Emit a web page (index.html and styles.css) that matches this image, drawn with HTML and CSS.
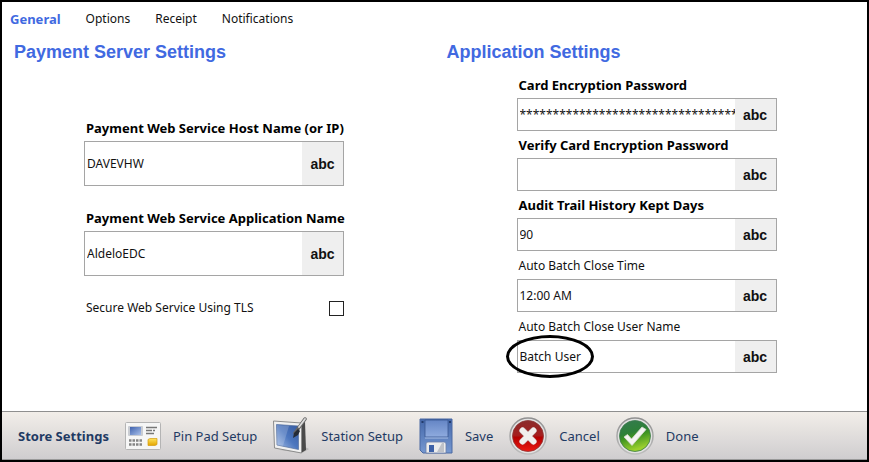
FILE: index.html
```html
<!DOCTYPE html>
<html lang="en">
<head>
    <meta charset="UTF-8">
    <meta name="viewport" content="width=device-width, initial-scale=1.0">
    <title>Store Settings</title>
    <link rel="stylesheet" href="styles.css">
</head>
<body>

    <nav class="tabs">
        <a href="#general" class="active">General</a>
        <a href="#options">Options</a>
        <a href="#receipt">Receipt</a>
        <a href="#notifications">Notifications</a>
    </nav>

    <main class="settings">
        <section class="column server">
            <h2>Payment Server Settings</h2>
            <div class="fields">
                <div class="field required tall">
                    <label for="hostName">Payment Web Service Host Name (or IP)</label>
                    <div class="box">
                        <input type="text" id="hostName" value="DAVEVHW">
                        <button type="button">abc</button>
                    </div>
                </div>
                <div class="field required tall">
                    <label for="appName">Payment Web Service Application Name</label>
                    <div class="box">
                        <input type="text" id="appName" value="AldeloEDC">
                        <button type="button">abc</button>
                    </div>
                </div>
                <div class="check">
                    <label for="tls">Secure Web Service Using TLS</label>
                    <input type="checkbox" id="tls">
                </div>
            </div>
        </section>

        <section class="column application">
            <h2>Application Settings</h2>
            <div class="fields">
                <div class="field required">
                    <label for="password">Card Encryption Password</label>
                    <div class="box">
                        <input type="text" id="password" value="****************************************">
                        <button type="button">abc</button>
                    </div>
                </div>
                <div class="field required">
                    <label for="verify">Verify Card Encryption Password</label>
                    <div class="box">
                        <input type="text" id="verify">
                        <button type="button">abc</button>
                    </div>
                </div>
                <div class="field required">
                    <label for="auditDays">Audit Trail History Kept Days</label>
                    <div class="box">
                        <input type="text" id="auditDays" value="90">
                        <button type="button">abc</button>
                    </div>
                </div>
                <div class="field">
                    <label for="closeTime">Auto Batch Close Time</label>
                    <div class="box">
                        <input type="text" id="closeTime" value="12:00 AM">
                        <button type="button">abc</button>
                    </div>
                </div>
                <div class="field">
                    <label for="closeUser">Auto Batch Close User Name</label>
                    <div class="box">
                        <input type="text" id="closeUser" value="Batch User">
                        <button type="button">abc</button>
                        <span class="circle"></span>
                    </div>
                </div>
            </div>
        </section>
    </main>

    <footer class="toolbar">
        <strong>Store Settings</strong>
        <button type="button">
            <svg width="36" height="28" viewBox="0 0 36 28">
                <defs>
                    <linearGradient id="screen" x1="0" y1="0" x2="1" y2="1">
                        <stop offset="0" stop-color="#3f62ae"/>
                        <stop offset="1" stop-color="#a9c0ea"/>
                    </linearGradient>
                    <linearGradient id="gold" x1="0" y1="0" x2="0" y2="1">
                        <stop offset="0" stop-color="#ffe45c"/>
                        <stop offset="1" stop-color="#e3a400"/>
                    </linearGradient>
                </defs>
                <rect x="0.5" y="0.5" width="35" height="27" rx="1" fill="#f6f6f6" stroke="#b4b4b4"/>
                <rect x="3" y="4" width="15" height="10" rx="1" fill="#c9ccd2"/>
                <rect x="5" y="5" width="11" height="8" fill="url(#screen)"/>
                <path d="M21 5.500h11M21 8.500h6M28 8.500h2M21 11.500h8" stroke="#777" stroke-width="1.300"/>
                <path d="M4 18.500h13M4 22.500h13" stroke="#858585" stroke-width="2.500" stroke-dasharray="2.500 1"/>
                <path d="M23 17.500l2-1h7v6l-2 1h-7z" fill="url(#gold)" stroke="#d29c12" stroke-width="0.700"/>
            </svg>
            Pin Pad Setup
        </button>
        <button type="button">
            <svg width="36" height="38" viewBox="0 0 36 38">
                <defs>
                    <linearGradient id="tablet" x1="1" y1="0" x2="0" y2="1">
                        <stop offset="0" stop-color="#35599f"/>
                        <stop offset="0.5" stop-color="#4d77bf"/>
                        <stop offset="1" stop-color="#a9c1e8"/>
                    </linearGradient>
                </defs>
                <path d="M7 33l22 3 7-4-6-3z" fill="#aaa" opacity="0.700"/>
                <path d="M28 6l4-1 1 28-5 3z" fill="#4a4a4a"/>
                <path d="M0.500 4l28 2v30L1.500 31z" fill="#f0f0f0" stroke="#8c8c8c"/>
                <path d="M3.500 7.500l22 1.500v23.500L4 28z" fill="url(#tablet)" stroke="#55709f" stroke-width="0.700"/>
                <path d="M4 8l12 1L10 29l-6-1z" fill="#fff" opacity="0.180"/>
                <path d="M32 2L22 16" stroke="#666" stroke-width="3.500" stroke-linecap="round"/>
                <path d="M32 2l-6 8" stroke="#ddd" stroke-width="1.800" stroke-linecap="round"/>
                <path d="M25 12l-4 4-1 5 5-3 2-4z" fill="#252b36"/>
            </svg>
            Station Setup
        </button>
        <button type="button">
            <svg width="34" height="36" viewBox="0 0 34 36">
                <defs>
                    <linearGradient id="disk" x1="0" y1="0" x2="0" y2="1">
                        <stop offset="0" stop-color="#4467aa"/>
                        <stop offset="1" stop-color="#7698d0"/>
                    </linearGradient>
                    <linearGradient id="label" x1="0" y1="0" x2="0" y2="1">
                        <stop offset="0" stop-color="#6485c5"/>
                        <stop offset="1" stop-color="#8fabde"/>
                    </linearGradient>
                </defs>
                <path d="M1 1h32v34H4l-3-3z" fill="url(#disk)" stroke="#4a68a2"/>
                <path d="M6 2h23v17H6z" fill="url(#label)" stroke="#38568f" stroke-width="0.800"/>
                <path d="M6 20h23" stroke="#a9bfe6"/>
                <path d="M2.500 3h2v2h-2zM30 3h2v2h-2z" fill="#233b6b"/>
                <path d="M7 35V26q0-2 2-2h16q2 0 2 2v9z" fill="#ececec" stroke="#6b7fa8" stroke-width="0.800"/>
                <path d="M10 27h5v7h-5z" fill="#3e62a8"/>
                <path d="M18 34l5-9h2v9z" fill="#bfc2c8"/>
            </svg>
            Save
        </button>
        <button type="button">
            <svg width="38" height="38" viewBox="0 0 38 38">
                <defs>
                    <linearGradient id="red" x1="0" y1="0" x2="0" y2="1">
                        <stop offset="0" stop-color="#8b2c2c"/>
                        <stop offset="0.480" stop-color="#a51e1e"/>
                        <stop offset="0.550" stop-color="#b40000"/>
                        <stop offset="1" stop-color="#ee1a12"/>
                    </linearGradient>
                    <linearGradient id="ring" x1="0" y1="0" x2="0" y2="1">
                        <stop offset="0" stop-color="#909090"/>
                        <stop offset="1" stop-color="#bdbdbd"/>
                    </linearGradient>
                </defs>
                <circle cx="19" cy="19" r="18" fill="#e2e2e2" stroke="url(#ring)" stroke-width="1.500"/>
                <circle cx="19" cy="19" r="15.500" fill="url(#red)" stroke="#8d3636" stroke-width="0.800"/>
                <path d="M14 14l10 10M24 14L14 24" stroke="#999" stroke-width="7" stroke-linecap="round" opacity="0.500"/>
                <path d="M13.500 13.500l11 11M24.500 13.500l-11 11" stroke="#f1efed" stroke-width="6" stroke-linecap="round"/>
            </svg>
            Cancel
        </button>
        <button type="button">
            <svg width="38" height="38" viewBox="0 0 38 38">
                <defs>
                    <linearGradient id="green" x1="0" y1="0" x2="0.300" y2="1">
                        <stop offset="0" stop-color="#357a52"/>
                        <stop offset="0.450" stop-color="#2d8038"/>
                        <stop offset="0.600" stop-color="#3f9420"/>
                        <stop offset="1" stop-color="#9bd02e"/>
                    </linearGradient>
                </defs>
                <circle cx="19" cy="19" r="18" fill="#e2e2e2" stroke="url(#ring)" stroke-width="1.500"/>
                <circle cx="19" cy="19" r="15.500" fill="url(#green)" stroke="#3c7a4c" stroke-width="0.800"/>
                <path d="M8 20l3.500-2.500 4 4.500L26 10l4 2.500-14 16z" fill="#f4f4f2" stroke="#d5d8d0" stroke-width="0.800" stroke-linejoin="round"/>
            </svg>
            Done
        </button>
    </footer>

</body>
</html>
```
FILE: styles.css
```css
* {
    box-sizing: border-box;
}
body {
    display: flex;
    flex-direction: column;
    min-height: 100vh;
    margin: 0;
    border: 2px solid #000;
    background-color: #fff;
    color: #111;
    font-family: "Noto Sans", sans-serif;
    font-size: 12px;
    line-height: 18px;
}
input, button {
    margin: 0;
    padding: 0;
    border: none;
    background: none;
    color: inherit;
    font: inherit;
}
.tabs {
    display: flex;
    gap: 25px;
    padding: 8px 8px 0;
}
.tabs a {
    color: #111;
    text-decoration: none;
}
.tabs .active {
    color: #4169e1;
    font-size: 13px;
    font-weight: bold;
}
.settings {
    flex: 1;
    display: grid;
    grid-template-columns: 1fr 1fr;
    padding-bottom: 36px;
}
.column {
    padding: 12px 12px 0;
}
h2 {
    margin: 0;
    color: #4169e1;
    font-family: "Liberation Sans", Arial, sans-serif;
    font-size: 18px;
    line-height: 24px;
}
.fields {
    display: flex;
    flex-direction: column;
    width: 260px;
    margin-left: 70px;
}
.server .fields {
    gap: 23px;
    padding-top: 55px;
}
.application .fields {
    gap: 5px;
    padding-top: 12px;
}
.field {
    display: flex;
    flex-direction: column;
    gap: 4px;
}
.application .field:not(.required) {
    margin-top: 1px;
}
.field label {
    padding-left: 2px;
    white-space: nowrap;
}
.required label {
    color: #000;
    font-size: 13px;
    font-weight: bold;
}
.box {
    position: relative;
    display: flex;
    height: 33px;
    border: 1px solid #a5a5a5;
}
.tall .box {
    height: 45px;
}
.box input {
    flex: 1;
    min-width: 0;
    padding-left: 2px;
}
.box button {
    width: 41px;
    background-color: #efefef;
    font-family: "Liberation Sans", Arial, sans-serif;
    font-size: 14px;
    font-weight: bold;
}
/* hand-drawn style ring around the batch user */
.circle {
    position: absolute;
    top: -6px;
    left: -12px;
    width: 88px;
    height: 43px;
    border: 3px solid #000;
    border-radius: 50%;
    pointer-events: none;
}
.check {
    display: flex;
    justify-content: space-between;
    align-items: center;
    padding-left: 2px;
}
.check input {
    appearance: none;
    width: 15px;
    height: 15px;
    border: 1px solid #222;
}
.toolbar {
    display: flex;
    align-items: center;
    gap: 16px;
    height: 49px;
    padding: 0 16px;
    border-top: 1px solid #8f8f8f;
    border-bottom: 1px solid #999;
    background: linear-gradient(#f2eee9, #cfcdcf);
    color: #1f3a63;
    font-size: 13px;
}
.toolbar button {
    display: flex;
    align-items: center;
    gap: 12px;
}
```
